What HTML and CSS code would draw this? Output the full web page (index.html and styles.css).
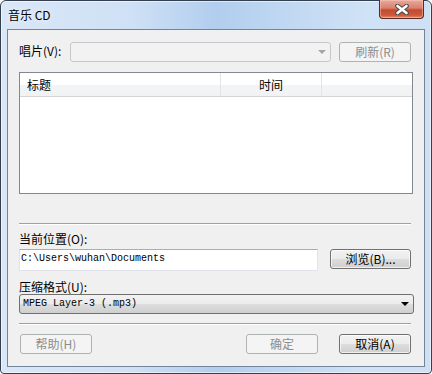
FILE: index.html
```html
<!DOCTYPE html>
<html lang="zh-CN">

<head>
    <meta charset="UTF-8">
    <meta name="viewport" content="width=device-width, initial-scale=1.0">
    <title>音乐 CD</title>
    <link rel="stylesheet" href="styles.css">
</head>

<body>
    <div class="window">
        <div class="titlebar">
            <span class="title">音乐 CD</span>
            <div class="close-btn">
                <svg width="14" height="11" viewBox="0 0 14 11">
                    <path d="M2.5 2 L11.5 9 M11.5 2 L2.5 9" stroke="#4a4a4a" stroke-width="4.6" stroke-linecap="round" />
                    <path d="M2.5 2 L11.5 9 M11.5 2 L2.5 9" stroke="#ffffff" stroke-width="2.6" stroke-linecap="round" />
                </svg>
            </div>
        </div>

        <div class="client">
            <div class="row row-album">
                <label class="album-label">唱片(V):</label>
                <div class="combo combo-disabled"><span class="arrow arrow-gray"></span></div>
                <button class="btn btn-refresh" disabled>刷新(R)</button>
            </div>

            <div class="listview">
                <div class="list-header">
                    <div class="col col-title">标题</div>
                    <div class="col col-time">时间</div>
                    <div class="col col-rest"></div>
                </div>
            </div>

            <div class="separator sep-top"></div>

            <div class="field-label label-path">当前位置(O):</div>
            <div class="row row-path">
                <div class="textbox">C:\Users\wuhan\Documents</div>
                <button class="btn btn-browse">浏览(B)...</button>
            </div>

            <div class="field-label label-format">压缩格式(U):</div>
            <div class="combo combo-active">
                <span class="combo-text">MPEG Layer-3 (.mp3)</span>
                <span class="arrow"></span>
            </div>

            <div class="separator sep-bottom"></div>

            <div class="button-row">
                <button class="btn btn-help" disabled>帮助(H)</button>
                <div class="spacer"></div>
                <button class="btn btn-ok" disabled>确定</button>
                <button class="btn btn-cancel">取消(A)</button>
            </div>
        </div>
    </div>
</body>

</html>
```

FILE: styles.css
```css
body {
    margin: 0;
    padding: 0;
    background-color: #ffffff;
    font-family: "Noto Sans CJK SC", "Liberation Sans", sans-serif;
    font-size: 12px;
    color: #000;
}

.window {
    width: 432px;
    height: 374px;
    box-sizing: border-box;
    border: 1px solid #34404f;
    border-radius: 6px 6px 4px 4px;
    padding: 0 6px 6px 6px;
    background: linear-gradient(90deg, #d9e7f7 0%, #cfe1f5 30%, #b2ceee 50%, #bcd5f1 62%, #d0e2f6 85%, #cde0f4 100%);
    box-shadow: inset 0 0 0 1px rgba(255, 255, 255, 0.55);
    display: flex;
    flex-direction: column;
}

.titlebar {
    height: 28px;
    display: flex;
    justify-content: space-between;
    align-items: flex-start;
}

.title {
    line-height: 28px;
    padding-left: 1px;
    font-size: 12px;
    color: #000;
    text-shadow: 0 0 6px rgba(255, 255, 255, 0.9);
}

.close-btn {
    width: 45px;
    height: 19px;
    margin-top: -1px;
    margin-right: 1px;
    box-sizing: border-box;
    border: 1px solid #5b2a22;
    border-top: none;
    border-radius: 0 0 4px 4px;
    background: linear-gradient(180deg, #e9a99b 0%, #d9806d 45%, #c44a30 55%, #cc5a3a 85%, #e0907a 100%);
    box-shadow: inset 0 0 0 1px rgba(255, 210, 200, 0.45);
    display: flex;
    justify-content: center;
    align-items: center;
}

.client {
    flex: 1;
    box-sizing: border-box;
    border: 1px solid #74859a;
    background-color: #f0f0f0;
    padding: 0 11px;
    display: flex;
    flex-direction: column;
}

.row {
    display: flex;
    align-items: flex-start;
}

.row-album {
    margin-top: 12px;
    height: 20px;
}

.album-label {
    width: 51px;
    line-height: 18px;
}

.combo {
    box-sizing: border-box;
    height: 20px;
    border-radius: 3px;
    display: flex;
    align-items: center;
    justify-content: space-between;
}

.combo-disabled {
    width: 261px;
    border: 1px solid #c5c8cc;
    background-color: #f2f2f2;
    justify-content: flex-end;
    padding-right: 4px;
}

.combo-active {
    margin-right: -1px;
    border: 1px solid #707070;
    background: linear-gradient(180deg, #f2f2f2 0%, #ebebeb 50%, #dddddd 51%, #cfcfcf 100%);
    padding: 0 4px 0 3px;
}

.combo-text {
    font-family: "Liberation Mono", "Noto Sans CJK SC", monospace;
    font-size: 10px;
    line-height: 18px;
}

.arrow {
    width: 0;
    height: 0;
    border-left: 4px solid transparent;
    border-right: 4px solid transparent;
    border-top: 4px solid #000;
}

.arrow-gray {
    border-top-color: #a5a5a5;
}

.btn {
    height: 20px;
    box-sizing: border-box;
    border: 1px solid #707070;
    border-radius: 3px;
    padding: 0;
    background: linear-gradient(180deg, #f2f2f2 0%, #ebebeb 50%, #dddddd 51%, #cfcfcf 100%);
    box-shadow: inset 0 0 0 1px rgba(255, 255, 255, 0.7);
    font-family: "Noto Sans CJK SC", "Liberation Sans", sans-serif;
    font-size: 12px;
    line-height: 16px;
    color: #000;
}

.btn:disabled {
    border-color: #adb2b5;
    background: #f4f4f4;
    box-shadow: none;
    color: #8d8d8d;
}

.btn-refresh {
    width: 72px;
    margin-left: 8px;
}

.listview {
    margin-top: 10px;
    height: 122px;
    box-sizing: border-box;
    border: 1px solid #828790;
    background-color: #ffffff;
}

.list-header {
    display: flex;
    height: 24px;
    box-sizing: border-box;
    border-bottom: 1px solid #d5d5d5;
    background: linear-gradient(180deg, #ffffff 0%, #ffffff 50%, #f3f4f6 51%, #f1f2f4 100%);
}

.col {
    box-sizing: border-box;
    line-height: 23px;
    border-right: 1px solid #e3e4e6;
}

.col-title {
    width: 201px;
    padding-left: 7px;
}

.col-time {
    width: 101px;
    text-align: center;
}

.col-rest {
    flex: 1;
    border-right: none;
}

.separator {
    height: 1px;
    background-color: #a0a0a0;
    border-bottom: 1px solid #ffffff;
    margin-right: 2px;
}

.sep-top {
    margin-top: 29px;
}

.field-label {
    line-height: 16px;
    height: 16px;
}

.label-path {
    margin-top: 6px;
}

.row-path {
    margin-top: 2px;
    height: 22px;
}

.textbox {
    width: 299px;
    height: 22px;
    box-sizing: border-box;
    border: 1px solid #e2e3ea;
    border-top-color: #abadb3;
    background-color: #ffffff;
    padding-left: 1px;
    font-family: "Liberation Mono", "Noto Sans CJK SC", monospace;
    font-size: 10px;
    line-height: 18px;
}

.btn-browse {
    width: 81px;
    margin-left: 12px;
}

.label-format {
    margin-top: 9px;
    height: 14px;
    line-height: 14px;
}

.sep-bottom {
    margin-top: 9px;
}

.button-row {
    margin-top: 9px;
    display: flex;
    padding: 0 2px 0 1px;
}

.spacer {
    flex: 1;
}

.btn-help,
.btn-ok,
.btn-cancel {
    width: 72px;
}

.btn-cancel {
    margin-left: 21px;
}
```
